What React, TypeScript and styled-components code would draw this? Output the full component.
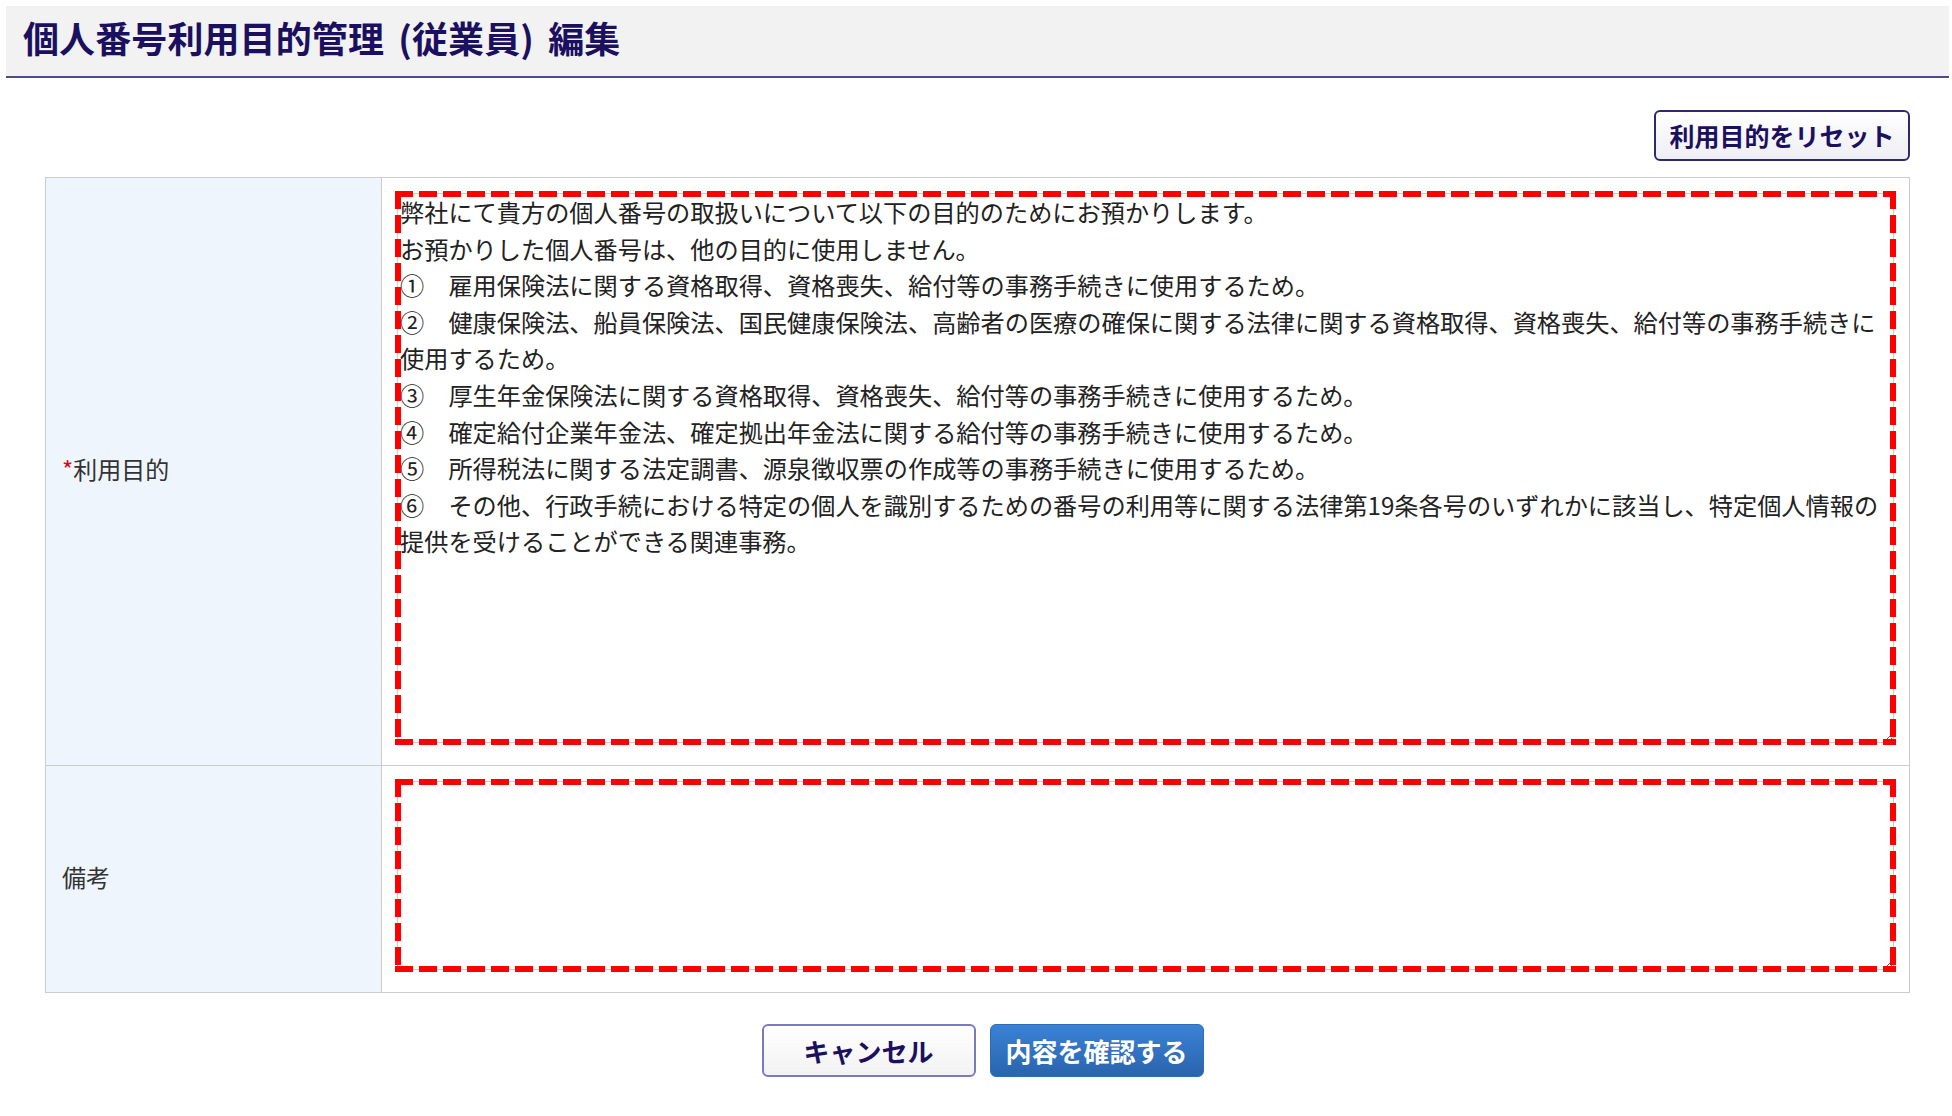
import React from 'react'
import styled, { createGlobalStyle } from 'styled-components'

const GlobalStyle = createGlobalStyle`
  html, body {
    margin: 0;
    background: #ffffff;
  }
  body {
    font-family: 'Noto Sans CJK JP', 'Noto Sans', sans-serif;
    color: #222;
  }
`

const Page = styled.div`
  padding: 6px 3px 40px 6px;
`

const Header = styled.header`
  box-sizing: border-box;
  display: flex;
  align-items: center;
  height: 72px;
  padding: 0 0 9px 17px;
  background: #f2f2f2;
  border-bottom: 2px solid #4e4a8f;
`

const Title = styled.h1`
  margin: 0;
  font-size: 36px;
  font-weight: 700;
  line-height: 1;
  color: #1b1060;
  letter-spacing: 0.1px;
  word-spacing: 6px;
`

const Main = styled.main`
  padding: 0 39px;
`

const Toolbar = styled.div`
  display: flex;
  justify-content: flex-end;
  margin: 32px 0 16px;
`

const Button = styled.button<{ $variant?: 'primary' | 'secondary' | 'outline' }>`
  box-sizing: border-box;
  padding: 0 12px;
  font-family: 'Noto Sans CJK JP', sans-serif;
  font-weight: 700;
  line-height: 1;
  cursor: pointer;
  border-radius: 6px;
  ${({ $variant }) =>
    $variant === 'primary'
      ? `
    width: 214px;
    height: 53px;
    font-size: 26px;
    color: #ffffff;
    border: 1px solid #2f6cb8;
    background: linear-gradient(#3a82d6, #2a64ad);
  `
      : $variant === 'outline'
      ? `
    width: 256px;
    height: 51px;
    font-size: 25px;
    color: #1b1060;
    border: 2px solid #2c2a6c;
    background: linear-gradient(#ffffff, #eeeef4);
  `
      : `
    width: 214px;
    height: 53px;
    font-size: 26px;
    color: #1b1060;
    border: 2px solid #7b79c4;
    background: linear-gradient(#ffffff, #f2f2f2);
  `}
`

const FormTable = styled.table`
  width: 100%;
  border-collapse: collapse;
`

const Label = styled.th`
  box-sizing: border-box;
  width: 336px;
  padding: 0 0 6px 16px;
  background: #eef5fd;
  border: 1px solid #cccccc;
  text-align: left;
  vertical-align: middle;
  font-size: 24px;
  font-weight: 400;
  color: #333;
`

const Required = styled.span`
  color: #e60012;
`

const Field = styled.td`
  padding: 15px 15px 22px;
  border: 1px solid #cccccc;
  vertical-align: top;
`

/* red dashed marker drawn over the field, as in the annotated screenshot */
const Marked = styled.div`
  position: relative;

  &::after {
    content: '';
    position: absolute;
    inset: -2px;
    pointer-events: none;
    background:
      repeating-linear-gradient(90deg, #ff0000 0 18px, transparent 18px 24px) left top / 100% 6px no-repeat,
      repeating-linear-gradient(90deg, #ff0000 0 18px, transparent 18px 24px) left bottom / 100% 6px no-repeat,
      repeating-linear-gradient(180deg, #ff0000 0 18px, transparent 18px 24px) left top / 6px 100% no-repeat,
      repeating-linear-gradient(180deg, #ff0000 0 18px, transparent 18px 24px) right top / 6px 100% no-repeat;
  }
`

const TextArea = styled.textarea<{ $height: number }>`
  display: block;
  box-sizing: border-box;
  width: 100%;
  height: ${({ $height }) => $height}px;
  margin: 0;
  padding: 0 2px;
  border: 1px solid #cccccc;
  outline: none;
  font-family: 'Noto Sans CJK JP', sans-serif;
  font-size: 24.2px;
  line-height: 36.6px;
  color: #222;
  background: #ffffff;
  overflow: hidden;
`

const Actions = styled.div`
  display: flex;
  justify-content: center;
  gap: 14px;
  margin-top: 31px;
  padding-left: 10px;
`

const purpose = [
  '弊社にて貴方の個人番号の取扱いについて以下の目的のためにお預かりします。',
  'お預かりした個人番号は、他の目的に使用しません。',
  '①　雇用保険法に関する資格取得、資格喪失、給付等の事務手続きに使用するため。',
  '②　健康保険法、船員保険法、国民健康保険法、高齢者の医療の確保に関する法律に関する資格取得、資格喪失、給付等の事務手続きに使用するため。',
  '③　厚生年金保険法に関する資格取得、資格喪失、給付等の事務手続きに使用するため。',
  '④　確定給付企業年金法、確定拠出年金法に関する給付等の事務手続きに使用するため。',
  '⑤　所得税法に関する法定調書、源泉徴収票の作成等の事務手続きに使用するため。',
  '⑥　その他、行政手続における特定の個人を識別するための番号の利用等に関する法律第19条各号のいずれかに該当し、特定個人情報の提供を受けることができる関連事務。',
].join('\n')

const App = () => {
  return (
    <Page>
      <GlobalStyle />
      <Header>
        <Title>個人番号利用目的管理 (従業員) 編集</Title>
      </Header>

      <Main>
        <Toolbar>
          <Button $variant="outline">利用目的をリセット</Button>
        </Toolbar>

        <FormTable>
          <tbody>
            <tr>
              <Label>
                <Required>*</Required>利用目的
              </Label>
              <Field>
                <Marked>
                  <TextArea $height={550} defaultValue={purpose} />
                </Marked>
              </Field>
            </tr>
            <tr>
              <Label>備考</Label>
              <Field>
                <Marked>
                  <TextArea $height={189} defaultValue="" />
                </Marked>
              </Field>
            </tr>
          </tbody>
        </FormTable>

        <Actions>
          <Button $variant="secondary">キャンセル</Button>
          <Button $variant="primary">内容を確認する</Button>
        </Actions>
      </Main>
    </Page>
  )
}

export default App
